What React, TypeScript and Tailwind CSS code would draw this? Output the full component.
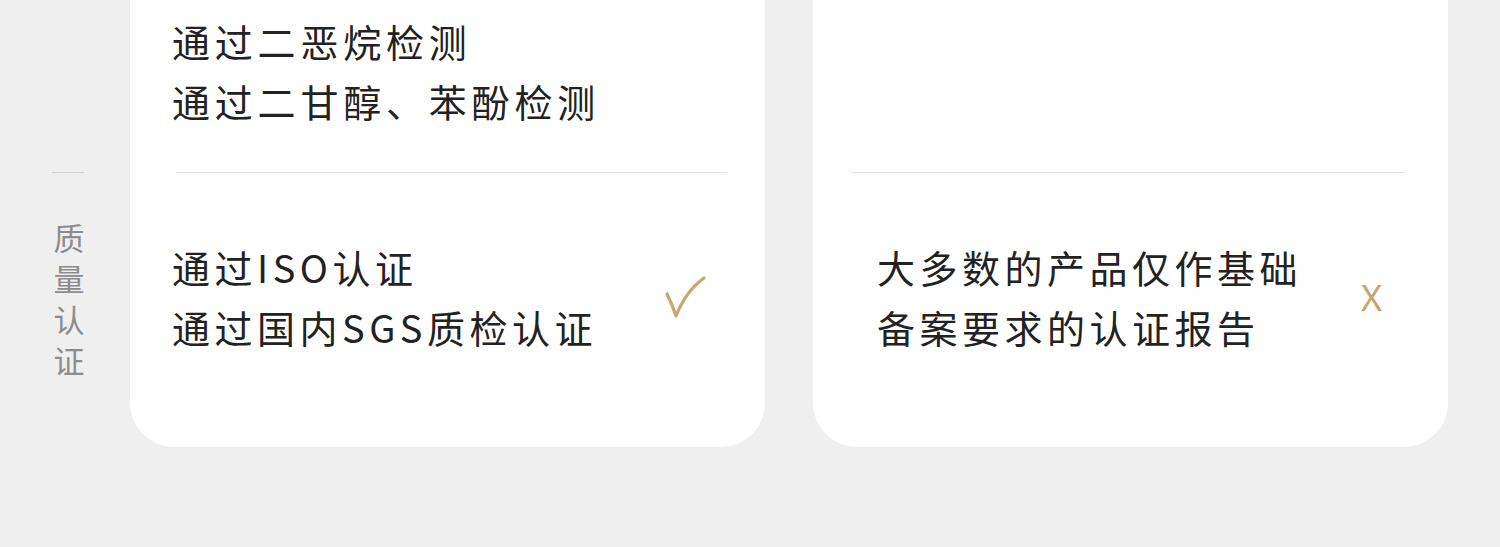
import React from "react";

const cjk = { fontFamily: '"Noto Sans CJK SC", "Noto Sans", sans-serif' };

function Check() {
  return (
    <svg width="44" height="46" viewBox="0 0 44 46" fill="none">
      <path d="M3 19 C6 25 9 32 12 41 C18 26 26 13 40 3" stroke="#c9a66f" strokeWidth="3.2" strokeLinecap="round" strokeLinejoin="round" />
    </svg>
  );
}

export default function App() {
  return (
    <div className="w-[1500px] h-[547px] bg-[#f0efef] flex overflow-hidden" style={cjk}>
      <div className="w-[130px] shrink-0 flex flex-col">
        <div className="h-[172px]" />
        <div className="ml-[52px] w-[32px] h-[1px] bg-[#d2d2d2]" />
        <div className="ml-[52px] w-[34px] mt-[43px] flex flex-col items-center text-[31px] leading-[41px] text-[#8c8c8c]">
          <span>质</span>
          <span>量</span>
          <span>认</span>
          <span>证</span>
        </div>
      </div>

      <div className="w-[635px] shrink-0 bg-white rounded-b-[44px] h-[447px] flex flex-col">
        <div className="h-[172px] pt-[11px] pl-[42px] text-[38px] leading-[60px] tracking-[4.8px] text-[#222]">
          <div>通过二恶烷检测</div>
          <div>通过二甘醇、苯酚检测</div>
        </div>
        <div className="ml-[46px] mr-[38px] h-[1px] bg-[#e2e2e2]" />
        <div className="flex items-center justify-between pl-[42px] pr-[57px] pt-[64px] pb-[90px]">
          <div className="text-[38px] leading-[60px] tracking-[4.5px] text-[#222]">
            <div>通过ISO认证</div>
            <div>通过国内SGS质检认证</div>
          </div>
          <div className="mt-[2px]">
            <Check />
          </div>
        </div>
      </div>

      <div className="w-[48px] shrink-0" />

      <div className="w-[635px] shrink-0 bg-white rounded-b-[44px] h-[447px] flex flex-col">
        <div className="h-[172px]" />
        <div className="ml-[39px] mr-[43px] h-[1px] bg-[#e2e2e2]" />
        <div className="flex items-center justify-between pl-[64px] pr-[66px] pt-[64px] pb-[90px]">
          <div className="text-[38px] leading-[60px] tracking-[4.5px] text-[#222]">
            <div>大多数的产品仅作基础</div>
            <div>备案要求的认证报告</div>
          </div>
          <div className="mt-[2px] text-[36px] leading-[40px] text-[#c9a46c]" style={{ fontFamily: '"Noto Sans", sans-serif' }}>
            X
          </div>
        </div>
      </div>
    </div>
  );
}
